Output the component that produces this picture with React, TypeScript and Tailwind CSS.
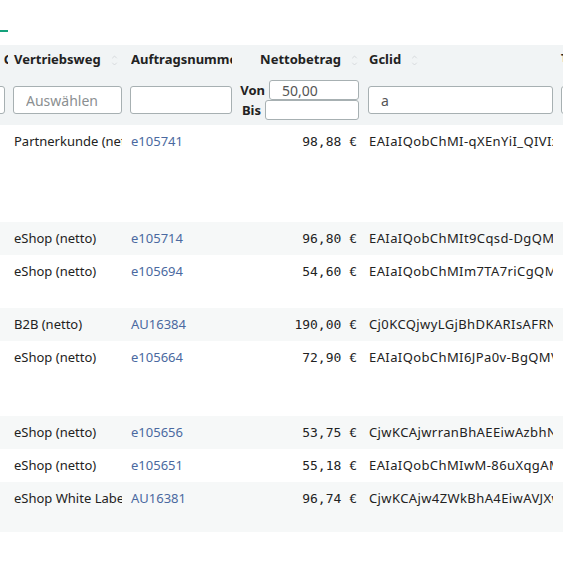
import { ChevronDown, ChevronUp } from "lucide-react";

type Row = {
  weg: string;
  nr: string;
  betrag: string;
  gclid: string;
  h: string;
};

const rows: Row[] = [
  { weg: "Partnerkunde (netto)", nr: "e105741", betrag: "98,88", gclid: "EAIaIQobChMI-qXEnYiI_QIVIxYrCh", h: "h-[97px]" },
  { weg: "eShop (netto)", nr: "e105714", betrag: "96,80", gclid: "EAIaIQobChMIt9Cqsd-DgQMVxyz", h: "h-[33px]" },
  { weg: "eShop (netto)", nr: "e105694", betrag: "54,60", gclid: "EAIaIQobChMIm7TA7riCgQMVabc", h: "h-[53px]" },
  { weg: "B2B (netto)", nr: "AU16384", betrag: "190,00", gclid: "Cj0KCQjwyLGjBhDKARIsAFRNgW", h: "h-[33px]" },
  { weg: "eShop (netto)", nr: "e105664", betrag: "72,90", gclid: "EAIaIQobChMI6JPa0v-BgQMVdef", h: "h-[75px]" },
  { weg: "eShop (netto)", nr: "e105656", betrag: "53,75", gclid: "CjwKCAjwrranBhAEEiwAzbhNtQ", h: "h-[33px]" },
  { weg: "eShop (netto)", nr: "e105651", betrag: "55,18", gclid: "EAIaIQobChMIwM-86uXqgAMVghi", h: "h-[33px]" },
  { weg: "eShop White Label", nr: "AU16381", betrag: "96,74", gclid: "CjwKCAjw4ZWkBhA4EiwAVJXwqZ", h: "h-[50px]" },
];

function SortIcon() {
  return (
    <span className="ml-[9px] inline-flex flex-col items-center text-[#c9cdd0]">
      <ChevronUp className="-mb-[1px] h-[8px] w-[9px]" strokeWidth={2} />
      <ChevronDown className="h-[8px] w-[9px]" strokeWidth={2} />
    </span>
  );
}

const field =
  "block rounded-[3px] border border-[#a7b0b2] bg-white px-3 text-[14px] font-normal text-[#555] outline-none";
const input = `${field} h-[28px] w-full`;

export default function App() {
  return (
    <div
      className="h-[563px] w-[563px] overflow-hidden bg-white text-[#222]"
      style={{ fontFamily: '"Noto Sans", Arial, sans-serif' }}
    >
      <div className="h-[45px] pt-[30px]">
        <div className="h-[2px] w-[8px] bg-[#15a27c]" />
      </div>
      <table className="w-[657px] max-w-none table-fixed border-collapse">
        <colgroup>
          <col className="w-[8px]" />
          <col className="w-[118px]" />
          <col className="w-[110px]" />
          <col className="w-[128px]" />
          <col className="w-[193px]" />
          <col className="w-[100px]" />
        </colgroup>
        <thead className="bg-[#f1f4f5]">
          <tr className="h-[30px] text-[13px] font-bold">
            <th className="overflow-hidden p-0">
              <div className="flex justify-end">
                <span className="-mr-[4px]">C</span>
              </div>
            </th>
            <th className="pl-[6px] text-left">
              <div className="flex items-center whitespace-nowrap">
                Vertriebsweg
                <SortIcon />
              </div>
            </th>
            <th className="overflow-hidden pl-[5px] text-left">
              <div className="mr-[4px] overflow-hidden whitespace-nowrap">Auftragsnummer</div>
            </th>
            <th className="text-right">
              <div className="flex items-center justify-end whitespace-nowrap pr-[5px]">
                Nettobetrag
                <SortIcon />
              </div>
            </th>
            <th className="pl-[5px] text-left">
              <div className="flex items-center whitespace-nowrap">
                Gclid
                <SortIcon />
              </div>
            </th>
            <th className="pl-[4px] text-left align-top">
              <div className="pt-[6px] text-[10px]">T</div>
            </th>
          </tr>
          <tr className="h-[50px] align-middle">
            <td className="overflow-hidden p-0">
              <div className="-ml-[40px] w-[45px]">
                <input className={input} readOnly />
              </div>
            </td>
            <td className="pl-[5px] pr-[4px]">
              <input className={`${input} placeholder:text-[#8b8f91]`} placeholder="Auswählen" readOnly />
            </td>
            <td className="pl-[4px] pr-[4px]">
              <input className={input} readOnly />
            </td>
            <td className="pl-[4px] pr-[5px]">
              <div className="flex flex-col text-[13px] font-bold leading-none">
                <div className="flex items-center justify-end gap-[4px]">
                  <span>Von</span>
                  <input className={`${field} h-[20px] w-[90px]`} value="50,00" readOnly />
                </div>
                <div className="flex items-center justify-end gap-[4px]">
                  <span>Bis</span>
                  <input className={`${field} h-[20px] w-[94px]`} readOnly />
                </div>
              </div>
            </td>
            <td className="pl-[4px] pr-[4px]">
              <input className={input} value="a" readOnly />
            </td>
            <td className="pl-[4px]">
              <input className={input} readOnly />
            </td>
          </tr>
        </thead>
        <tbody className="text-[13px]">
          {rows.map((r, i) => (
            <tr key={r.nr} className={`${r.h} align-top ${i % 2 === 1 ? "bg-[#f6f8f8]" : "bg-white"}`}>
              <td className="p-0" />
              <td className="overflow-hidden pl-[6px] pt-[7px]">
                <div className="mr-[4px] overflow-hidden whitespace-nowrap">{r.weg}</div>
              </td>
              <td className="pl-[5px] pt-[7px] text-[#4a69a0]">{r.nr}</td>
              <td
                className="pr-[7px] pt-[7px] text-right"
                style={{ fontFamily: '"DejaVu Sans Mono", monospace' }}
              >
                {r.betrag} €
              </td>
              <td className="overflow-hidden pl-[5px] pt-[7px]">
                <div className="mr-[4px] overflow-hidden whitespace-nowrap tracking-[0.4px]">{r.gclid}</div>
              </td>
              <td />
            </tr>
          ))}
        </tbody>
      </table>
    </div>
  );
}
